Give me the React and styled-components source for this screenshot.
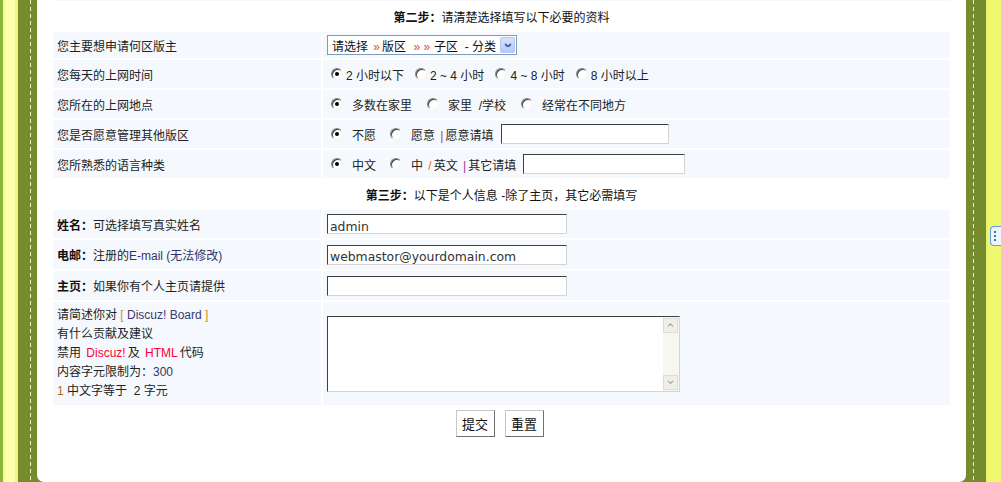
import styled, { createGlobalStyle } from "styled-components";

const GlobalStyle = createGlobalStyle`
  html, body { margin: 0; padding: 0; }
  body {
    font-family: "Liberation Sans", "Noto Sans CJK SC", sans-serif;
    font-size: 12px;
    color: #222;
  }
`;

const Frame = styled.div`
  position: relative;
  display: flex;
  width: 1001px;
  height: 482px;
  overflow: hidden;
  background: #748b2e;
`;

const Rail = styled.div`
  position: relative;
  flex: none;
  width: ${(p) => (p.$side === "left" ? 37 : 35)}px;
  background: ${(p) =>
    p.$side === "left"
      ? "linear-gradient(to right, #8db53c 0 3px, #f8f98e 3px 5px, #ffffb0 5px 15px, #f3f486 15px 18px, #748b2e 18px)"
      : "linear-gradient(to right, #748b2e 0 20px, #e9f468 20px 22px, #f0f872 22px)"};

  &::after {
    content: "";
    position: absolute;
    top: 0;
    bottom: 0;
    left: ${(p) => (p.$side === "left" ? 30 : 7)}px;
    width: 1px;
    background: repeating-linear-gradient(to bottom, #f2f2b0 0 4px, transparent 4px 7px);
  }
`;

const Panel = styled.main`
  flex: 1;
  height: 482px;
  box-sizing: border-box;
  padding: 0 16px;
  background: #fff;
  border-radius: 0 0 7px 7px;
`;

const Form = styled.div`
  display: flex;
  flex-direction: column;
  gap: 2px;
`;

const Stub = styled.div`
  height: 1px;
  background: #f5f9fd;
`;

const Heading = styled.div`
  height: ${(p) => p.$h}px;
  display: flex;
  align-items: center;
  justify-content: center;
  color: #111;
`;

const Row = styled.div`
  display: grid;
  grid-template-columns: 268px 1fr;
  column-gap: 2px;
  height: ${(p) => p.$h}px;
`;

const Cell = styled.div`
  display: flex;
  flex-direction: ${(p) => (p.$stack ? "column" : "row")};
  align-items: ${(p) => (p.$stack ? "flex-start" : "center")};
  justify-content: ${(p) => (p.$stack ? "center" : "flex-start")};
  padding-left: 4px;
  background: #f5f9fd;
  line-height: ${(p) => (p.$stack ? "19px" : "normal")};
  white-space: pre;
`;

const Strong = styled.b`
  font-weight: bold;
  color: #111;
`;

const Tint = styled.span`
  color: ${(p) => p.$c};
  margin: 0 ${(p) => p.$m || 0}px;
`;

const SelectBox = styled.div`
  display: flex;
  align-items: center;
  width: 190px;
  height: 20px;
  box-sizing: border-box;
  border: 1px solid #7f9db9;
  background: #fff;
  padding-left: 4px;
  gap: 4px;
`;

const SelectText = styled.span`
  flex: 1;
  color: #111;
  white-space: pre;
`;

const DropButton = styled.span`
  display: flex;
  align-items: center;
  justify-content: center;
  width: 15px;
  height: 16px;
  margin-right: 1px;
  box-sizing: border-box;
  border: 1px solid #b4c8f6;
  border-radius: 2px;
  background: linear-gradient(#d6e2fd, #b5c9f7);
`;

const RadioGroup = styled.div`
  display: flex;
  align-items: center;
  gap: ${(p) => p.$gap}px;
  padding-left: 4px;
`;

const Choice = styled.span`
  display: inline-flex;
  align-items: center;
  gap: ${(p) => p.$gap}px;
  white-space: pre;
`;

const Radio = styled.span`
  position: relative;
  width: 12px;
  height: 12px;
  box-sizing: border-box;
  border-radius: 50%;
  border: 1px solid;
  border-color: #808080 #f4f4f4 #f4f4f4 #808080;
  box-shadow: inset 1px 1px 0 #404040;
  background: #fff;

  &::after {
    content: "";
    display: ${(p) => (p.$on ? "block" : "none")};
    position: absolute;
    left: 3px;
    top: 3px;
    width: 4px;
    height: 4px;
    border-radius: 50%;
    background: #000;
  }
`;

const TextInput = styled.input`
  width: ${(p) => p.$w}px;
  height: 20px;
  box-sizing: border-box;
  margin: 0 0 0 ${(p) => p.$ml || 0}px;
  padding: 4px 2px 0;
  border: 1px solid;
  border-color: #404040 #d4d4d4 #d4d4d4 #404040;
  background: #fff;
  font-family: "DejaVu Sans", sans-serif;
  font-size: 12.4px;
  color: #333;
  outline: none;
`;

const TextArea = styled.div`
  display: flex;
  width: 353px;
  height: 76px;
  box-sizing: border-box;
  border: 1px solid;
  border-color: #404040 #d4d4d4 #d4d4d4 #404040;
  background: #fff;
`;

const TextSpace = styled.div`
  flex: 1;
`;

const ScrollBar = styled.div`
  width: 16px;
  display: flex;
  flex-direction: column;
  justify-content: space-between;
  background: #f7f7f1;
  padding: 1px 0;
`;

const ScrollButton = styled.span`
  display: flex;
  align-items: center;
  justify-content: center;
  width: 15px;
  height: 15px;
  box-sizing: border-box;
  border: 1px solid #dcdcd4;
  background: #efefe8;
`;

const Buttons = styled.div`
  height: 33px;
  display: flex;
  align-items: center;
  justify-content: center;
  gap: 10px;
  padding-right: 4px;
`;

const Button = styled.button`
  width: 39px;
  height: 27px;
  padding: 0;
  border: 1px solid;
  border-color: #c8c8c8 #707070 #707070 #c8c8c8;
  background: #fff;
  font-family: "Noto Sans CJK SC", sans-serif;
  font-size: 13px;
  color: #111;
`;

const SideTab = styled.div`
  position: absolute;
  right: 0;
  top: 226px;
  width: 11px;
  height: 20px;
  box-sizing: border-box;
  border: 1px solid #5f9be6;
  border-right: none;
  border-radius: 4px 0 0 4px;
  background: #eef5fd;
  display: flex;
  flex-direction: column;
  justify-content: center;
  gap: 2px;
  padding-left: 3px;
`;

const TabDot = styled.span`
  width: 2px;
  height: 2px;
  background: #2f6fcf;
`;

const Chevron = ({ up, color = "#4a6497", w = 8, sw = 2 }) => (
  <svg width={w} height={w * 0.6} viewBox="0 0 8 5">
    <polyline
      points={up ? "1,4 4,1 7,4" : "1,1 4,4 7,1"}
      fill="none"
      stroke={color}
      strokeWidth={sw}
    />
  </svg>
);

const timeChoices = ["2 小时以下", "2 ~ 4 小时", "4 ~ 8 小时", "8 小时以上"];
const placeChoices = ["多数在家里", "家里  /学校", "经常在不同地方"];

const App = () => (
  <>
    <GlobalStyle />
    <Frame>
      <Rail $side="left" />
      <Panel>
        <Form>
          <Stub />
          <Heading $h={27}>
            <Strong>第二步：</Strong>请清楚选择填写以下必要的资料
          </Heading>

          <Row $h={26}>
            <Cell>您主要想申请何区版主</Cell>
            <Cell>
              <SelectBox>
                <SelectText>
                  请选择 <Tint $c="#e0501c" $m={2}>»</Tint>版区 <Tint $c="#e0501c" $m={4}>» »</Tint>子区  - 分类
                </SelectText>
                <DropButton>
                  <Chevron />
                </DropButton>
              </SelectBox>
            </Cell>
          </Row>

          <Row $h={28}>
            <Cell>您每天的上网时间</Cell>
            <Cell>
              <RadioGroup $gap={11}>
                {timeChoices.map((t, i) => (
                  <Choice key={t} $gap={3}>
                    <Radio $on={i === 0} />
                    {t}
                  </Choice>
                ))}
              </RadioGroup>
            </Cell>
          </Row>

          <Row $h={28}>
            <Cell>您所在的上网地点</Cell>
            <Cell>
              <RadioGroup $gap={15}>
                {placeChoices.map((t, i) => (
                  <Choice key={t} $gap={9}>
                    <Radio $on={i === 0} />
                    {t}
                  </Choice>
                ))}
              </RadioGroup>
            </Cell>
          </Row>

          <Row $h={28}>
            <Cell>您是否愿意管理其他版区</Cell>
            <Cell>
              <RadioGroup $gap={14}>
                <Choice $gap={9}>
                  <Radio $on />
                  不愿
                </Choice>
                <Choice $gap={9}>
                  <Radio />
                  <span>
                    愿意 <Tint $c="#993399" $m={2}>|</Tint>愿意请填
                  </span>
                  <TextInput $w={168} $ml={-2} readOnly value="" />
                </Choice>
              </RadioGroup>
            </Cell>
          </Row>

          <Row $h={28}>
            <Cell>您所熟悉的语言种类</Cell>
            <Cell>
              <RadioGroup $gap={14}>
                <Choice $gap={9}>
                  <Radio $on />
                  中文
                </Choice>
                <Choice $gap={9}>
                  <Radio />
                  <span>
                    中 <Tint $c="#ff6600" $m={2}>/</Tint>英文 <Tint $c="#993399" $m={2}>|</Tint>其它请填
                  </span>
                  <TextInput $w={162} $ml={-2} readOnly value="" />
                </Choice>
              </RadioGroup>
            </Cell>
          </Row>

          <Heading $h={28}>
            <Strong>第三步：</Strong>以下是个人信息 -除了主页，其它必需填写
          </Heading>

          <Row $h={28}>
            <Cell>
              <Strong>姓名：</Strong>可选择填写真实姓名
            </Cell>
            <Cell>
              <TextInput $w={240} readOnly value="admin" />
            </Cell>
          </Row>

          <Row $h={29}>
            <Cell>
              <Strong>电邮：</Strong>注册的<Tint $c="#33336a">E-mail (无法修改)</Tint>
            </Cell>
            <Cell>
              <TextInput $w={240} readOnly value="webmastor@yourdomain.com" />
            </Cell>
          </Row>

          <Row $h={29}>
            <Cell>
              <Strong>主页：</Strong>如果你有个人主页请提供
            </Cell>
            <Cell>
              <TextInput $w={240} readOnly value="" />
            </Cell>
          </Row>

          <Row $h={103}>
            <Cell $stack>
              <span>
                请简述你对 <Tint $c="#e08a20">[</Tint>
                <Tint $c="#3a3a70"> Discuz! Board </Tint>
                <Tint $c="#e08a20">]</Tint>
              </span>
              <span>有什么贡献及建议</span>
              <span>
                禁用 <Tint $c="#ff0033" $m={2}>Discuz!</Tint>及 <Tint $c="#ff0033" $m={2}>HTML</Tint>代码
              </span>
              <span>
                内容字元限制为：<Tint $c="#33336a">300</Tint>
              </span>
              <span>
                <Tint $c="#b8660a">1</Tint> 中文字等于  2 字元
              </span>
            </Cell>
            <Cell>
              <TextArea>
                <TextSpace />
                <ScrollBar>
                  <ScrollButton>
                    <Chevron up color="#a8a8a0" w={7} sw={1.5} />
                  </ScrollButton>
                  <ScrollButton>
                    <Chevron color="#a8a8a0" w={7} sw={1.5} />
                  </ScrollButton>
                </ScrollBar>
              </TextArea>
            </Cell>
          </Row>

          <Buttons>
            <Button>提交</Button>
            <Button>重置</Button>
          </Buttons>
        </Form>
      </Panel>
      <Rail $side="right" />
      <SideTab>
        <TabDot />
        <TabDot />
        <TabDot />
      </SideTab>
    </Frame>
  </>
);

export default App;
